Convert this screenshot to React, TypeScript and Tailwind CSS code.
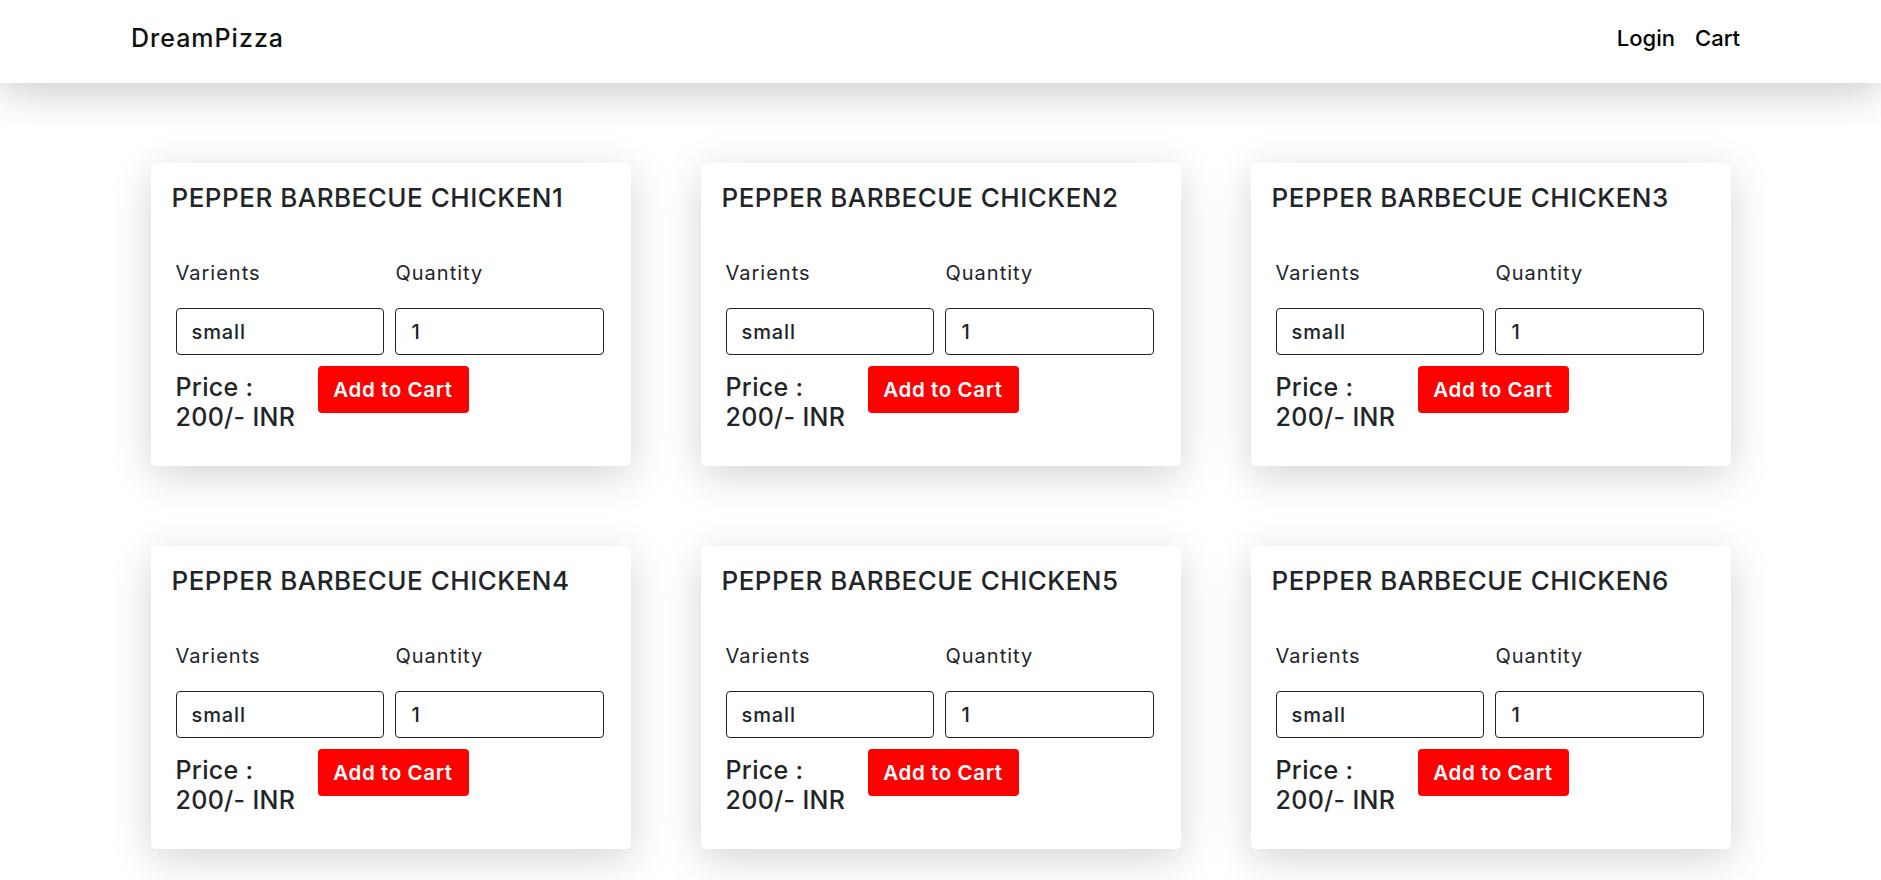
import React from "react";

const font = { fontFamily: "Inter, 'Noto Sans', sans-serif" };

function Card({ n }: { n: number }) {
  return (
    <div className="w-[480px] h-[303px] bg-white rounded-[5px] shadow-[0_10px_40px_rgba(0,0,0,0.17)] pl-[21px] pr-[26px] pt-[19px] text-[#212529]">
      <h1 className="text-[26px] leading-[32px] font-medium tracking-[0.5px] whitespace-nowrap">PEPPER BARBECUE CHICKEN{n}</h1>
      <div className="pl-[4px]">
        <div className="flex mt-[47px] h-[24px] text-[20px] leading-[24px] tracking-[1px]">
          <span className="w-[220px]">Varients</span>
          <span>Quantity</span>
        </div>
        <div className="flex gap-[11px] mt-[23px]">
          <div className="w-[208px] h-[47px] border border-[#222] rounded-[4px] flex items-center pl-[15px] text-[20px] leading-[24px] font-medium tracking-[0.9px]">small</div>
          <div className="w-[209px] h-[47px] border border-[#222] rounded-[4px] flex items-center pl-[16px] text-[20px] leading-[24px] font-medium">1</div>
        </div>
        <div className="flex mt-[11px]">
          <div className="w-[142px] pt-[6px] text-[25px] leading-[30px] font-medium tracking-[0.3px] whitespace-nowrap">
            <div>Price :</div>
            <div>200/- INR</div>
          </div>
          <button className="w-[151px] h-[47px] bg-[#ff0000] rounded-[4px] text-white text-[20.5px] leading-[25px] font-semibold tracking-[0.6px] whitespace-nowrap">Add to Cart</button>
        </div>
      </div>
    </div>
  );
}

export default function App() {
  return (
    <div className="min-h-[880px] bg-white" style={font}>
      <nav className="relative z-10 h-[83px] bg-white shadow-[0_10px_40px_rgba(0,0,0,0.2)] flex items-center justify-between pl-[131px] pr-[141px] pb-[8px]">
        <a className="text-[25px] leading-[30px] font-medium text-[#111] tracking-[1px]">DreamPizza</a>
        <div className="flex gap-[20px] text-[22px] leading-[28px] font-medium text-black">
          <a>Login</a>
          <a>Cart</a>
        </div>
      </nav>
      <div className="flex flex-wrap justify-center gap-x-[70px] gap-y-[80px] pt-[80px] pb-[40px]">
        {[1, 2, 3, 4, 5, 6].map((n) => (
          <Card key={n} n={n} />
        ))}
      </div>
    </div>
  );
}
